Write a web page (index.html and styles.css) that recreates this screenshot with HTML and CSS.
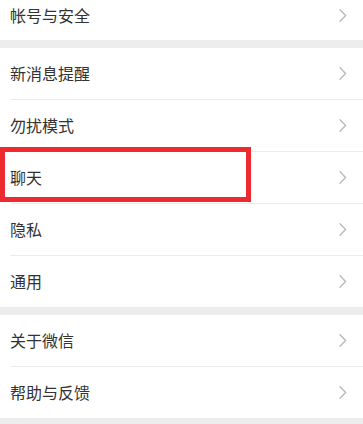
FILE: index.html
```html
<!DOCTYPE html>
<html lang="zh-CN">
<head>
<meta charset="utf-8">
<link rel="stylesheet" href="styles.css">
</head>
<body>
<div class="page">
  <div class="group group-first">
    <div class="row row-first"><span class="label">帐号与安全</span><svg class="chev" width="8" height="13" viewBox="0 0 8 13"><polyline points="1,0.8 6.6,6.5 1,12.2"/></svg></div>
  </div>
  <div class="group">
    <div class="row"><span class="label">新消息提醒</span><svg class="chev" width="8" height="13" viewBox="0 0 8 13"><polyline points="1,0.8 6.6,6.5 1,12.2"/></svg></div>
    <div class="row"><span class="label">勿扰模式</span><svg class="chev" width="8" height="13" viewBox="0 0 8 13"><polyline points="1,0.8 6.6,6.5 1,12.2"/></svg></div>
    <div class="row"><span class="label">聊天</span><svg class="chev" width="8" height="13" viewBox="0 0 8 13"><polyline points="1,0.8 6.6,6.5 1,12.2"/></svg><div class="highlight"></div></div>
    <div class="row"><span class="label">隐私</span><svg class="chev" width="8" height="13" viewBox="0 0 8 13"><polyline points="1,0.8 6.6,6.5 1,12.2"/></svg></div>
    <div class="row"><span class="label">通用</span><svg class="chev" width="8" height="13" viewBox="0 0 8 13"><polyline points="1,0.8 6.6,6.5 1,12.2"/></svg></div>
  </div>
  <div class="group">
    <div class="row"><span class="label">关于微信</span><svg class="chev" width="8" height="13" viewBox="0 0 8 13"><polyline points="1,0.8 6.6,6.5 1,12.2"/></svg></div>
    <div class="row"><span class="label">帮助与反馈</span><svg class="chev" width="8" height="13" viewBox="0 0 8 13"><polyline points="1,0.8 6.6,6.5 1,12.2"/></svg></div>
  </div>
</div>
</body>
</html>
```
FILE: styles.css
```css
html, body {
  margin: 0;
  padding: 0;
  background: #ededed;
  height: 100%;
  overflow: hidden;
}
.page {
  font-family: "Noto Sans CJK SC", "Noto Sans", sans-serif;
  display: flex;
  flex-direction: column;
  gap: 8px;
}
.group {
  background: #ffffff;
  padding-left: 10px;
}
.group-first {
  margin-top: -11px;
}
.row {
  position: relative;
  height: 49px;
  padding-bottom: 2px;
  display: flex;
  align-items: center;
  justify-content: space-between;
  padding-right: 16px;
  box-sizing: content-box;
}
.row + .row {
  border-top: 1px solid #ececec;
}
.row-first {
  padding-top: 1px;
  padding-bottom: 0;
  height: 50px;
}
.label {
  font-size: 16px;
  color: #333333;
}
.chev {
  margin-top: 2px;
}
.chev polyline {
  fill: none;
  stroke: #b8b8b8;
  stroke-width: 1.3;
  stroke-linecap: round;
  stroke-linejoin: round;
}
.row-first .chev {
  margin-top: 0;
}
.highlight {
  position: absolute;
  left: -10px;
  top: -5px;
  width: 251px;
  height: 55px;
  box-sizing: border-box;
  border: 5px solid #ec2a30;
  pointer-events: none;
}
```
